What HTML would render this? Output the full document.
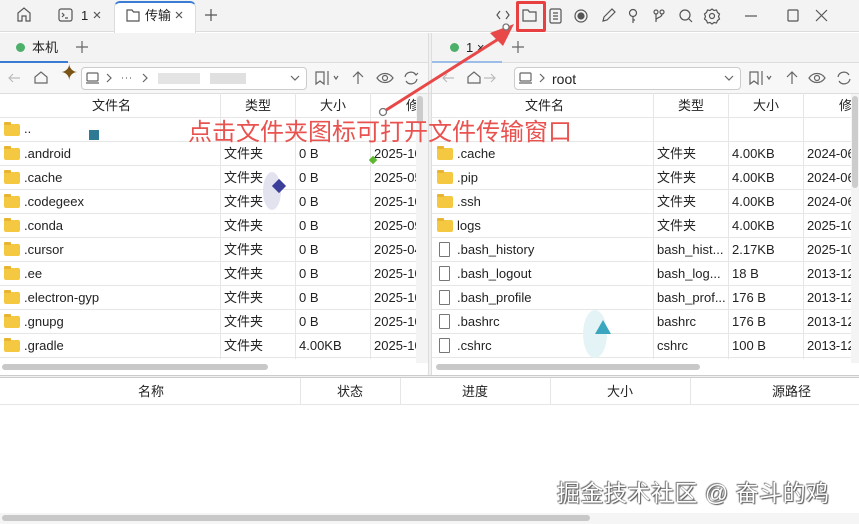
<!DOCTYPE html>
<html><head><meta charset="utf-8">
<style>
*{box-sizing:border-box;margin:0;padding:0}
body{width:859px;height:524px;overflow:hidden;background:#fff;font-family:"Liberation Sans","Noto Sans CJK SC",sans-serif;font-size:13px;color:#222;position:relative}
.a{position:absolute}
.t{position:absolute;white-space:nowrap;line-height:16px}
.hl{position:absolute;height:1px;background:#e6e6e6}
.vl{position:absolute;width:1px;background:#e6e6e6}
.fold{position:absolute;width:16px;height:12px;background:#f5c842;border-radius:2px}
.fold:before{content:"";position:absolute;left:0;top:-2px;width:7px;height:3px;background:#e8b530;border-radius:1px 1px 0 0}
.file{position:absolute;width:11px;height:15px;border:1px solid #777;border-radius:1px;background:#fff}
</style></head><body>
<!-- title/tab bar -->
<div class="a" style="left:0;top:0;width:859px;height:32px;background:#f3f3f3;border-bottom:1px solid #dcdcdc"></div>
<div class="a" style="left:114px;top:1px;width:82px;height:32px;background:#fff;border:1px solid #dcdcdc;border-bottom:none;border-top:2px solid #3a7bd5;border-radius:6px 6px 0 0"></div>
<svg class="a" style="left:0;top:0" width="859" height="32" fill="none" stroke="#555" stroke-width="1.2">
<path d="M18 21V13l6-5 6 5v8h-4v-5h-4v5z"/>
<rect x="59" y="9" width="13" height="12" rx="2"/><path d="M62 13l2 2-2 2M65 18h3"/>
<path d="M94 12l6 6M100 12l-6 6"/>
<path d="M127 10h5l1.5 2H139v9h-12z"/>
<path d="M176 12l6 6M182 12l-6 6"/>
<path d="M211 9v12M205 15h12"/>
<path d="M500 11l-3 4 3 4M506 11l3 4-3 4"/>
<path d="M523 10h5l1.5 2H536v9h-13z"/>
<rect x="550" y="9" width="11" height="14" rx="1.5"/><path d="M553 13h5M553 16h5M553 19h5"/>
<circle cx="581" cy="16" r="6"/><circle cx="581" cy="16" r="3" fill="#555"/>
<path d="M603 21l1-4 8-8 3 3-8 8z"/>
<circle cx="633" cy="13" r="3.5"/><path d="M633 16.5V23M633 20h2"/>
<circle cx="656" cy="12" r="2"/><circle cx="662" cy="12" r="2"/><path d="M656 14v8M662 14c0 4-6 3-6 6"/>
<circle cx="685" cy="15" r="5"/><path d="M689 19l3 3"/>
<circle cx="712" cy="16" r="2.5"/><path d="M712 9l2 1.5 2.5-.5 1 2.5 2 1.5-1 2.5 1 2.5-2 1.5-1 2.5-2.5-.5-2 1.5-2-1.5-2.5.5-1-2.5-2-1.5 1-2.5-1-2.5 2-1.5 1-2.5 2.5.5z"/>
<path d="M745 16h12"/><rect x="788" y="10" width="10" height="11" rx="1"/><path d="M816 10l11 11M827 10l-11 11"/>
</svg>
<div class="t" style="left:145px;top:8px;font-size:13px">传输</div>
<div class="t" style="left:81px;top:8px;font-size:13px">1</div>
<div class="a" style="left:516px;top:1px;width:30px;height:31px;border:3px solid #e84040;border-radius:2px"></div>
<!-- second bar -->
<div class="a" style="left:0;top:33px;width:859px;height:30px;background:#f3f3f3;border-bottom:1px solid #ddd"></div>
<div class="a" style="left:0;top:61px;width:68px;height:2px;background:#3a7bd5"></div>
<div class="a" style="left:432px;top:61px;width:70px;height:2px;background:#9bbde8"></div>
<div class="a" style="left:16px;top:43px;width:9px;height:9px;border-radius:50%;background:#4caf6a"></div>
<div class="t" style="left:32px;top:40px">本机</div>
<div class="a" style="left:450px;top:43px;width:9px;height:9px;border-radius:50%;background:#4caf6a"></div>
<div class="t" style="left:466px;top:40px">1 ×</div>
<svg class="a" style="left:0;top:33px" width="859" height="30" stroke="#666" stroke-width="1.2" fill="none"><path d="M82 8v12M76 14h12M518 8v12M512 14h12"/></svg>
<div class="a" style="left:428px;top:33px;width:4px;height:345px;background:#f0f0f0;border-left:1px solid #ddd;border-right:1px solid #ddd"></div>
<!-- toolbars -->
<div class="a" style="left:0;top:63px;width:428px;height:30px;background:#f7f7f7"></div>
<div class="a" style="left:432px;top:63px;width:427px;height:30px;background:#f7f7f7"></div>
<div class="a" style="left:81px;top:67px;width:226px;height:23px;background:#fff;border:1px solid #ccc;border-radius:4px"></div>
<div class="a" style="left:514px;top:67px;width:227px;height:23px;background:#fff;border:1px solid #ccc;border-radius:4px"></div>
<div class="a" style="left:158px;top:73px;width:42px;height:11px;background:#e4e4e4"></div>
<div class="a" style="left:210px;top:73px;width:36px;height:11px;background:#e0e0e0"></div>
<div class="t" style="left:552px;top:71px;font-size:14px">root</div>
<svg class="a" style="left:0;top:63px" width="859" height="30" fill="none" stroke="#666" stroke-width="1.2">
<path d="M20 15H9M13 11l-4 4 4 4" stroke="#bbb"/><path d="M35 20v-6l6-5 6 5v6z"/>
<rect x="87" y="10" width="11" height="8" rx="1"/><path d="M86 20h13M107 11l4 4-4 4M122 15h1M126 15h1M130 15h1M143 11l4 4-4 4"/>
<path d="M291 13l4 4 4-4M316 9h8v12l-4-3-4 3zM328 8v14M334 13l2 3 2-3M358 21V9M353 14l5-5 5 5"/>
<path d="M377 15c4-6 12-6 16 0-4 6-12 6-16 0z"/><circle cx="385" cy="15" r="2.5"/>
<path d="M405 14a6 6 0 0 1 11-2M417 16a6 6 0 0 1-11 2M414 10l2 2 2-2"/>
<path d="M454 15H443M447 11l-4 4 4 4" stroke="#bbb"/><path d="M468 20v-6l6-5 6 5v6z"/><path d="M484 15h11M491 11l4 4-4 4" stroke="#bbb"/>
<rect x="520" y="10" width="11" height="8" rx="1"/><path d="M519 20h13M540 11l4 4-4 4"/>
<path d="M725 13l4 4 4-4M750 9h8v12l-4-3-4 3zM762 8v14M767 13l2 3 2-3M792 21V9M787 14l5-5 5 5"/>
<path d="M809 15c4-6 12-6 16 0-4 6-12 6-16 0z"/><circle cx="817" cy="15" r="2.5"/>
<path d="M838 14a6 6 0 0 1 11-2M850 16a6 6 0 0 1-11 2"/>
</svg>
<!-- headers -->
<div class="hl" style="left:0;top:117px;width:859px"></div>
<div class="hl" style="left:0;top:93px;width:859px;background:#ddd"></div>
<div class="t" style="left:92px;top:98px">文件名</div><div class="t" style="left:245px;top:98px">类型</div><div class="t" style="left:320px;top:98px">大小</div><div class="t" style="left:406px;top:98px">修</div>
<div class="t" style="left:525px;top:98px">文件名</div><div class="t" style="left:678px;top:98px">类型</div><div class="t" style="left:753px;top:98px">大小</div><div class="t" style="left:839px;top:98px">修</div>
<div class="vl" style="left:220px;top:93px;height:266px"></div><div class="vl" style="left:295px;top:93px;height:266px"></div><div class="vl" style="left:370px;top:93px;height:266px"></div>
<div class="vl" style="left:653px;top:93px;height:266px"></div><div class="vl" style="left:728px;top:93px;height:266px"></div><div class="vl" style="left:803px;top:93px;height:266px"></div>
<!-- row lines -->
<div class="hl" style="left:0;top:141px;width:416px"></div><div class="hl" style="left:0;top:165px;width:416px"></div><div class="hl" style="left:0;top:189px;width:416px"></div><div class="hl" style="left:0;top:213px;width:416px"></div><div class="hl" style="left:0;top:237px;width:416px"></div><div class="hl" style="left:0;top:261px;width:416px"></div><div class="hl" style="left:0;top:285px;width:416px"></div><div class="hl" style="left:0;top:309px;width:416px"></div><div class="hl" style="left:0;top:333px;width:416px"></div><div class="hl" style="left:0;top:357px;width:416px"></div>
<div class="hl" style="left:432px;top:141px;width:419px"></div><div class="hl" style="left:432px;top:165px;width:419px"></div><div class="hl" style="left:432px;top:189px;width:419px"></div><div class="hl" style="left:432px;top:213px;width:419px"></div><div class="hl" style="left:432px;top:237px;width:419px"></div><div class="hl" style="left:432px;top:261px;width:419px"></div><div class="hl" style="left:432px;top:285px;width:419px"></div><div class="hl" style="left:432px;top:309px;width:419px"></div><div class="hl" style="left:432px;top:333px;width:419px"></div><div class="hl" style="left:432px;top:357px;width:419px"></div>
<!-- left rows -->
<div class="fold" style="left:4px;top:124px"></div><div class="t" style="left:24px;top:121px">..</div>
<div class="fold" style="left:4px;top:148px"></div><div class="t" style="left:24px;top:146px">.android</div><div class="t" style="left:224px;top:146px">文件夹</div><div class="t" style="left:299px;top:146px">0 B</div><div class="t" style="left:374px;top:146px">2025-10</div>
<div class="fold" style="left:4px;top:172px"></div><div class="t" style="left:24px;top:170px">.cache</div><div class="t" style="left:224px;top:170px">文件夹</div><div class="t" style="left:299px;top:170px">0 B</div><div class="t" style="left:374px;top:170px">2025-05</div>
<div class="fold" style="left:4px;top:196px"></div><div class="t" style="left:24px;top:194px">.codegeex</div><div class="t" style="left:224px;top:194px">文件夹</div><div class="t" style="left:299px;top:194px">0 B</div><div class="t" style="left:374px;top:194px">2025-10</div>
<div class="fold" style="left:4px;top:220px"></div><div class="t" style="left:24px;top:218px">.conda</div><div class="t" style="left:224px;top:218px">文件夹</div><div class="t" style="left:299px;top:218px">0 B</div><div class="t" style="left:374px;top:218px">2025-09</div>
<div class="fold" style="left:4px;top:244px"></div><div class="t" style="left:24px;top:242px">.cursor</div><div class="t" style="left:224px;top:242px">文件夹</div><div class="t" style="left:299px;top:242px">0 B</div><div class="t" style="left:374px;top:242px">2025-04</div>
<div class="fold" style="left:4px;top:268px"></div><div class="t" style="left:24px;top:266px">.ee</div><div class="t" style="left:224px;top:266px">文件夹</div><div class="t" style="left:299px;top:266px">0 B</div><div class="t" style="left:374px;top:266px">2025-10</div>
<div class="fold" style="left:4px;top:292px"></div><div class="t" style="left:24px;top:290px">.electron-gyp</div><div class="t" style="left:224px;top:290px">文件夹</div><div class="t" style="left:299px;top:290px">0 B</div><div class="t" style="left:374px;top:290px">2025-10</div>
<div class="fold" style="left:4px;top:316px"></div><div class="t" style="left:24px;top:314px">.gnupg</div><div class="t" style="left:224px;top:314px">文件夹</div><div class="t" style="left:299px;top:314px">0 B</div><div class="t" style="left:374px;top:314px">2025-10</div>
<div class="fold" style="left:4px;top:340px"></div><div class="t" style="left:24px;top:338px">.gradle</div><div class="t" style="left:224px;top:338px">文件夹</div><div class="t" style="left:299px;top:338px">4.00KB</div><div class="t" style="left:374px;top:338px">2025-10</div>
<!-- right rows -->
<div class="fold" style="left:437px;top:148px"></div><div class="t" style="left:457px;top:146px">.cache</div><div class="t" style="left:657px;top:146px">文件夹</div><div class="t" style="left:732px;top:146px">4.00KB</div><div class="t" style="left:807px;top:146px">2024-06</div>
<div class="fold" style="left:437px;top:172px"></div><div class="t" style="left:457px;top:170px">.pip</div><div class="t" style="left:657px;top:170px">文件夹</div><div class="t" style="left:732px;top:170px">4.00KB</div><div class="t" style="left:807px;top:170px">2024-06</div>
<div class="fold" style="left:437px;top:196px"></div><div class="t" style="left:457px;top:194px">.ssh</div><div class="t" style="left:657px;top:194px">文件夹</div><div class="t" style="left:732px;top:194px">4.00KB</div><div class="t" style="left:807px;top:194px">2024-06</div>
<div class="fold" style="left:437px;top:220px"></div><div class="t" style="left:457px;top:218px">logs</div><div class="t" style="left:657px;top:218px">文件夹</div><div class="t" style="left:732px;top:218px">4.00KB</div><div class="t" style="left:807px;top:218px">2025-10</div>
<div class="file" style="left:439px;top:242px"></div><div class="t" style="left:457px;top:242px">.bash_history</div><div class="t" style="left:657px;top:242px">bash_hist...</div><div class="t" style="left:732px;top:242px">2.17KB</div><div class="t" style="left:807px;top:242px">2025-10</div>
<div class="file" style="left:439px;top:266px"></div><div class="t" style="left:457px;top:266px">.bash_logout</div><div class="t" style="left:657px;top:266px">bash_log...</div><div class="t" style="left:732px;top:266px">18 B</div><div class="t" style="left:807px;top:266px">2013-12</div>
<div class="file" style="left:439px;top:290px"></div><div class="t" style="left:457px;top:290px">.bash_profile</div><div class="t" style="left:657px;top:290px">bash_prof...</div><div class="t" style="left:732px;top:290px">176 B</div><div class="t" style="left:807px;top:290px">2013-12</div>
<div class="file" style="left:439px;top:314px"></div><div class="t" style="left:457px;top:314px">.bashrc</div><div class="t" style="left:657px;top:314px">bashrc</div><div class="t" style="left:732px;top:314px">176 B</div><div class="t" style="left:807px;top:314px">2013-12</div>
<div class="file" style="left:439px;top:338px"></div><div class="t" style="left:457px;top:338px">.cshrc</div><div class="t" style="left:657px;top:338px">cshrc</div><div class="t" style="left:732px;top:338px">100 B</div><div class="t" style="left:807px;top:338px">2013-12</div>
<!-- v scrollbars -->
<div class="a" style="left:416px;top:94px;width:12px;height:269px;background:#f4f4f4"></div>
<div class="a" style="left:417px;top:96px;width:6px;height:28px;background:#ccc;border-radius:3px"></div>
<div class="a" style="left:851px;top:94px;width:8px;height:269px;background:#f4f4f4"></div>
<div class="a" style="left:852px;top:96px;width:6px;height:92px;background:#ccc;border-radius:3px"></div>
<!-- h scrollbars -->
<div class="a" style="left:0;top:359px;width:416px;height:16px;background:#fff"></div>
<div class="a" style="left:2px;top:364px;width:266px;height:6px;background:#c8c8c8;border-radius:3px"></div>
<div class="a" style="left:432px;top:359px;width:419px;height:16px;background:#fff"></div>
<div class="a" style="left:436px;top:364px;width:264px;height:6px;background:#c8c8c8;border-radius:3px"></div>
<div class="a" style="left:0;top:375px;width:859px;height:3px;background:#f0f0f0;border-top:1px solid #ccc;border-bottom:1px solid #ccc"></div>
<!-- decorations -->
<div class="a" style="left:89px;top:130px;width:10px;height:10px;background:#2e7a95"></div>
<div class="a" style="left:263px;top:172px;width:18px;height:38px;border-radius:50%;background:#e2e3ef"></div>
<div class="a" style="left:274px;top:181px;width:10px;height:10px;background:#3b3f9a;transform:rotate(45deg)"></div>
<div class="a" style="left:583px;top:310px;width:24px;height:48px;border-radius:50%;background:#e4f3f6"></div>
<div class="a" style="left:595px;top:320px;width:0;height:0;border-left:8px solid transparent;border-right:8px solid transparent;border-bottom:14px solid #3aa7be"></div>
<div class="a" style="left:370px;top:157px;width:6px;height:6px;background:#5cb82e;transform:rotate(45deg)"></div>
<div class="t" style="left:60px;top:62px;font-size:22px;line-height:22px;color:#7a5414">✦</div>
<!-- annotation -->
<div class="t" style="left:188px;top:119px;font-size:24px;line-height:28px;color:#e8524f">点击文件夹图标可打开文件传输窗口</div>
<svg class="a" style="left:0;top:0" width="859" height="524"><path d="M383 112L500 38" stroke="#e84848" stroke-width="3"/><path d="M514 24L490 33 503 46z" fill="#e84848"/><circle cx="383" cy="112" r="3.5" fill="#fff" stroke="#777" stroke-width="1.3"/><circle cx="506" cy="27" r="3" fill="#fff" stroke="#777" stroke-width="1.3"/></svg>
<!-- transfer table -->
<div class="hl" style="left:0;top:404px;width:859px"></div>
<div class="vl" style="left:300px;top:378px;height:26px"></div><div class="vl" style="left:400px;top:378px;height:26px"></div><div class="vl" style="left:550px;top:378px;height:26px"></div><div class="vl" style="left:690px;top:378px;height:26px"></div>
<div class="t" style="left:138px;top:384px">名称</div><div class="t" style="left:337px;top:384px">状态</div><div class="t" style="left:462px;top:384px">进度</div><div class="t" style="left:607px;top:384px">大小</div><div class="t" style="left:772px;top:384px">源路径</div>
<div class="t" style="left:557px;top:479px;font-size:23px;line-height:28px;letter-spacing:0.5px;color:#fff;text-shadow:0 0 1px #555,1px 1px 1px #555,-1px -1px 1px #777">掘金技术社区 @ 奋斗的鸡</div>
<div class="a" style="left:0;top:513px;width:859px;height:11px;background:#f5f5f5"></div>
<div class="a" style="left:2px;top:515px;width:588px;height:6px;background:#c8c8c8;border-radius:3px"></div>
</body></html>
